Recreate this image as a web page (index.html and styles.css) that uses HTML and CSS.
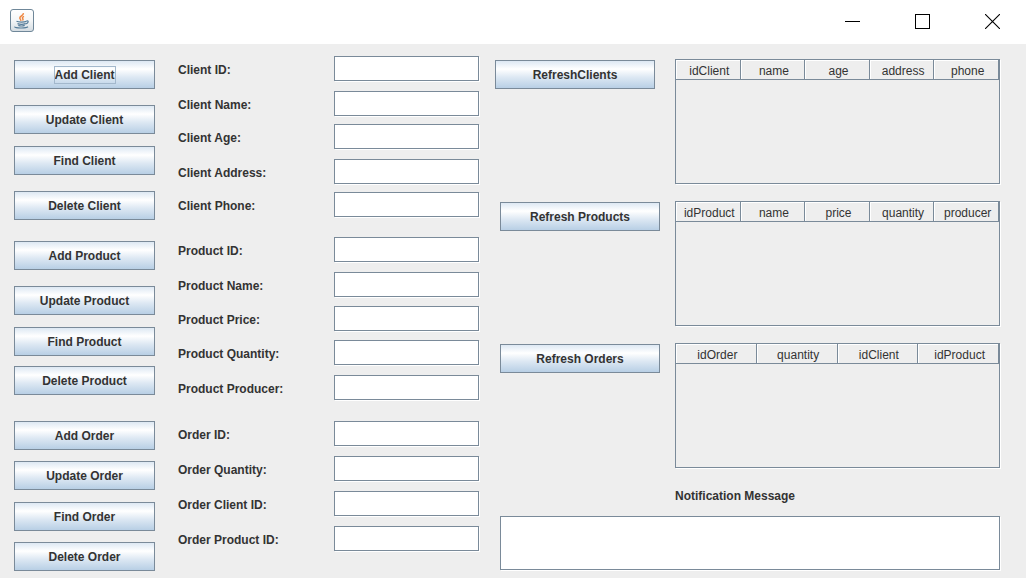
FILE: index.html
```html
<!DOCTYPE html>
<html lang="en">
<head>
<meta charset="utf-8">
<title>Order Management</title>
<link rel="stylesheet" href="styles.css">
</head>
<body>
<header class="titlebar">
  <svg class="app-icon" width="24" height="24" viewBox="0 0 24 24" aria-hidden="true">
    <defs>
      <linearGradient id="tile" x1="0" y1="0" x2="0" y2="1">
        <stop offset="0" stop-color="#ffffff"/>
        <stop offset="0.5" stop-color="#f4f6f7"/>
        <stop offset="1" stop-color="#d3dbe1"/>
      </linearGradient>
    </defs>
    <rect x="0.5" y="0.5" width="23" height="22" rx="2.5" fill="url(#tile)" stroke="#6f8799"/>
    <path d="M13.400 4.200c.3 2.400-4.200 3-3.600 5 .2.900 1.200 1.300 1 2.600M14 7.400c-1.800.8-1.900 1.400-1.200 2.300.5.700.2 1.300-.3 1.900" fill="none" stroke="#ee8640" stroke-width="1.500"/>
    <path d="M6.500 12.300c2 1 7.500.9 10 .1M7.500 14.600c2.300.8 6 .7 8 0M8.300 16.400c1.900.7 4.700.6 6.400 0M16.600 11.900c2.200-.4 2.300 1.900-1 3.100M4.800 17.600c-.5 1.700 11.200 2 13.200.2" fill="none" stroke="#557c99" stroke-width="1.200"/>
  </svg>
  <div class="window-controls">
    <button class="window-button" type="button" aria-label="Minimize">
      <svg width="15" height="15" viewBox="0 0 15 15"><path d="M0 7.500h15" stroke="#000"/></svg>
    </button>
    <button class="window-button" type="button" aria-label="Maximize">
      <svg width="15" height="15" viewBox="0 0 15 15"><rect x="0.5" y="0.5" width="14" height="14" fill="none" stroke="#000"/></svg>
    </button>
    <button class="window-button" type="button" aria-label="Close">
      <svg width="15" height="15" viewBox="0 0 15 15"><path d="M0 0l15 15M15 0L0 15" stroke="#000" stroke-width="1.100"/></svg>
    </button>
  </div>
</header>
<main class="workspace">
  <div class="actions">
    <div class="action-group action-group-client">
      <button class="button" type="button"><span class="focused">Add Client</span></button>
      <button class="button" type="button">Update Client</button>
      <button class="button" type="button">Find Client</button>
      <button class="button" type="button">Delete Client</button>
    </div>
    <div class="action-group action-group-product">
      <button class="button" type="button">Add Product</button>
      <button class="button" type="button">Update Product</button>
      <button class="button" type="button">Find Product</button>
      <button class="button" type="button">Delete Product</button>
    </div>
    <div class="action-group action-group-order">
      <button class="button" type="button">Add Order</button>
      <button class="button" type="button">Update Order</button>
      <button class="button" type="button">Find Order</button>
      <button class="button" type="button">Delete Order</button>
    </div>
  </div>

  <form class="fields">
    <div class="field-group field-group-client">
      <label for="client-id">Client ID:</label><input id="client-id" type="text">
      <label for="client-name">Client Name:</label><input id="client-name" type="text">
      <label for="client-age">Client Age:</label><input id="client-age" type="text">
      <label for="client-address">Client Address:</label><input id="client-address" type="text">
      <label for="client-phone">Client Phone:</label><input id="client-phone" type="text">
    </div>
    <div class="field-group field-group-product">
      <label for="product-id">Product ID:</label><input id="product-id" type="text">
      <label for="product-name">Product Name:</label><input id="product-name" type="text">
      <label for="product-price">Product Price:</label><input id="product-price" type="text">
      <label for="product-quantity">Product Quantity:</label><input id="product-quantity" type="text">
      <label for="product-producer">Product Producer:</label><input id="product-producer" type="text">
    </div>
    <div class="field-group field-group-order">
      <label for="order-id">Order ID:</label><input id="order-id" type="text">
      <label for="order-quantity">Order Quantity:</label><input id="order-quantity" type="text">
      <label for="order-client">Order Client ID:</label><input id="order-client" type="text">
      <label for="order-product">Order Product ID:</label><input id="order-product" type="text">
    </div>
  </form>

  <div class="results">
    <section class="result">
      <button class="button refresh refresh-start" type="button">RefreshClients</button>
      <div class="table-pane">
        <table class="table">
          <thead><tr><th>idClient</th><th>name</th><th>age</th><th>address</th><th>phone</th></tr></thead>
          <tbody></tbody>
        </table>
      </div>
    </section>
    <section class="result">
      <button class="button refresh" type="button">Refresh Products</button>
      <div class="table-pane">
        <table class="table">
          <thead><tr><th>idProduct</th><th>name</th><th>price</th><th>quantity</th><th>producer</th></tr></thead>
          <tbody></tbody>
        </table>
      </div>
    </section>
    <section class="result">
      <button class="button refresh" type="button">Refresh Orders</button>
      <div class="table-pane">
        <table class="table">
          <thead><tr><th>idOrder</th><th>quantity</th><th>idClient</th><th>idProduct</th></tr></thead>
          <tbody></tbody>
        </table>
      </div>
    </section>
    <div class="notification">
      <label class="notification-label" for="notification">Notification Message</label>
      <textarea class="notification-box" id="notification"></textarea>
    </div>
  </div>
</main>
</body>
</html>
```

FILE: styles.css
```css
:root {
  --edge: #7a8a99;
  --panel: #eeeeee;
  --text: #333333;
}

* {
  box-sizing: border-box;
}

body {
  margin: 0;
  min-height: 100vh;
  background: var(--panel);
  color: var(--text);
  font: bold 12px "Liberation Sans", Arial, sans-serif;
}

.titlebar {
  display: flex;
  justify-content: space-between;
  align-items: flex-start;
  height: 44px;
  padding-left: 10px;
  background: #ffffff;
}

.app-icon {
  margin-top: 9px;
}

.window-controls {
  display: flex;
  gap: 2px;
}

.window-button {
  display: flex;
  align-items: center;
  justify-content: center;
  width: 68px;
  height: 43px;
  padding: 0;
  border: 0;
  background: none;
}

.workspace {
  display: grid;
  grid-template-columns: 141px 308px minmax(505px, 1fr);
  column-gap: 16px;
  align-items: start;
  padding: 12px 26px 7px 14px;
}

.button {
  height: 29px;
  padding: 0;
  border: 1px solid var(--edge);
  border-radius: 0;
  background: linear-gradient(#dde8f3 0%, #ffffff 30%, #dde8f3 60%, #b8cfe5 100%);
  color: var(--text);
  font: inherit;
  text-align: center;
}

.focused {
  display: inline-block;
  line-height: 16px;
  outline: 1px solid #a3b8cc;
  outline-offset: 0;
}

.actions {
  padding-top: 4px;
}

.action-group {
  display: grid;
  align-items: start;
}

.action-group-client {
  grid-template-rows: 45px 41px 45px 50px;
}

.action-group-product {
  grid-template-rows: 45px 41px 39px 55px;
}

.action-group-order {
  grid-template-rows: 40px 41px 40px 29px;
}

.fields {
  padding-left: 7px;
}

.field-group {
  display: grid;
  grid-template-columns: 156px 1fr;
  align-items: start;
}

.field-group-client {
  grid-template-rows: 35px 33px 35px 33px 45px;
}

.field-group-product {
  grid-template-rows: 35px 34px 34px 35px 46px;
}

.field-group-order {
  grid-template-rows: 35px 35px 35px 28px;
}

.field-group label {
  line-height: 28px;
}

.field-group input,
.notification-box {
  width: 100%;
  border: 1px solid var(--edge);
  border-radius: 0;
  background: #ffffff;
  box-shadow: 1px 1px 0 #ffffff;
  color: var(--text);
  font: 12px "Liberation Sans", Arial, sans-serif;
}

.field-group input {
  height: 25px;
  padding: 0 2px;
}

.results {
  padding-top: 3px;
}

.result {
  display: grid;
  grid-template-columns: 165px 1fr;
  column-gap: 15px;
  align-items: start;
  margin-bottom: 17px;
}

.refresh {
  width: 160px;
  margin-top: 1px;
  justify-self: end;
}

.refresh-start {
  justify-self: start;
}

.table-pane {
  height: 125px;
  border: 1px solid var(--edge);
  box-shadow: 1px 1px 0 #ffffff;
}

.table {
  width: 100%;
  table-layout: fixed;
  border-collapse: separate;
  border-spacing: 0;
}

.table th {
  height: 20px;
  padding: 3px 0 0 3px;
  border-right: 1px solid var(--edge);
  border-bottom: 1px solid var(--edge);
  box-shadow: inset 1px 1px 0 #ffffff;
  font-size: 12px;
  font-weight: normal;
  line-height: 16px;
  text-align: center;
}

.notification {
  padding-left: 5px;
}

.notification-label {
  display: block;
  margin-left: 175px;
  padding-bottom: 9px;
  line-height: 22px;
}

.notification-box {
  display: block;
  height: 54px;
  resize: none;
}
```
